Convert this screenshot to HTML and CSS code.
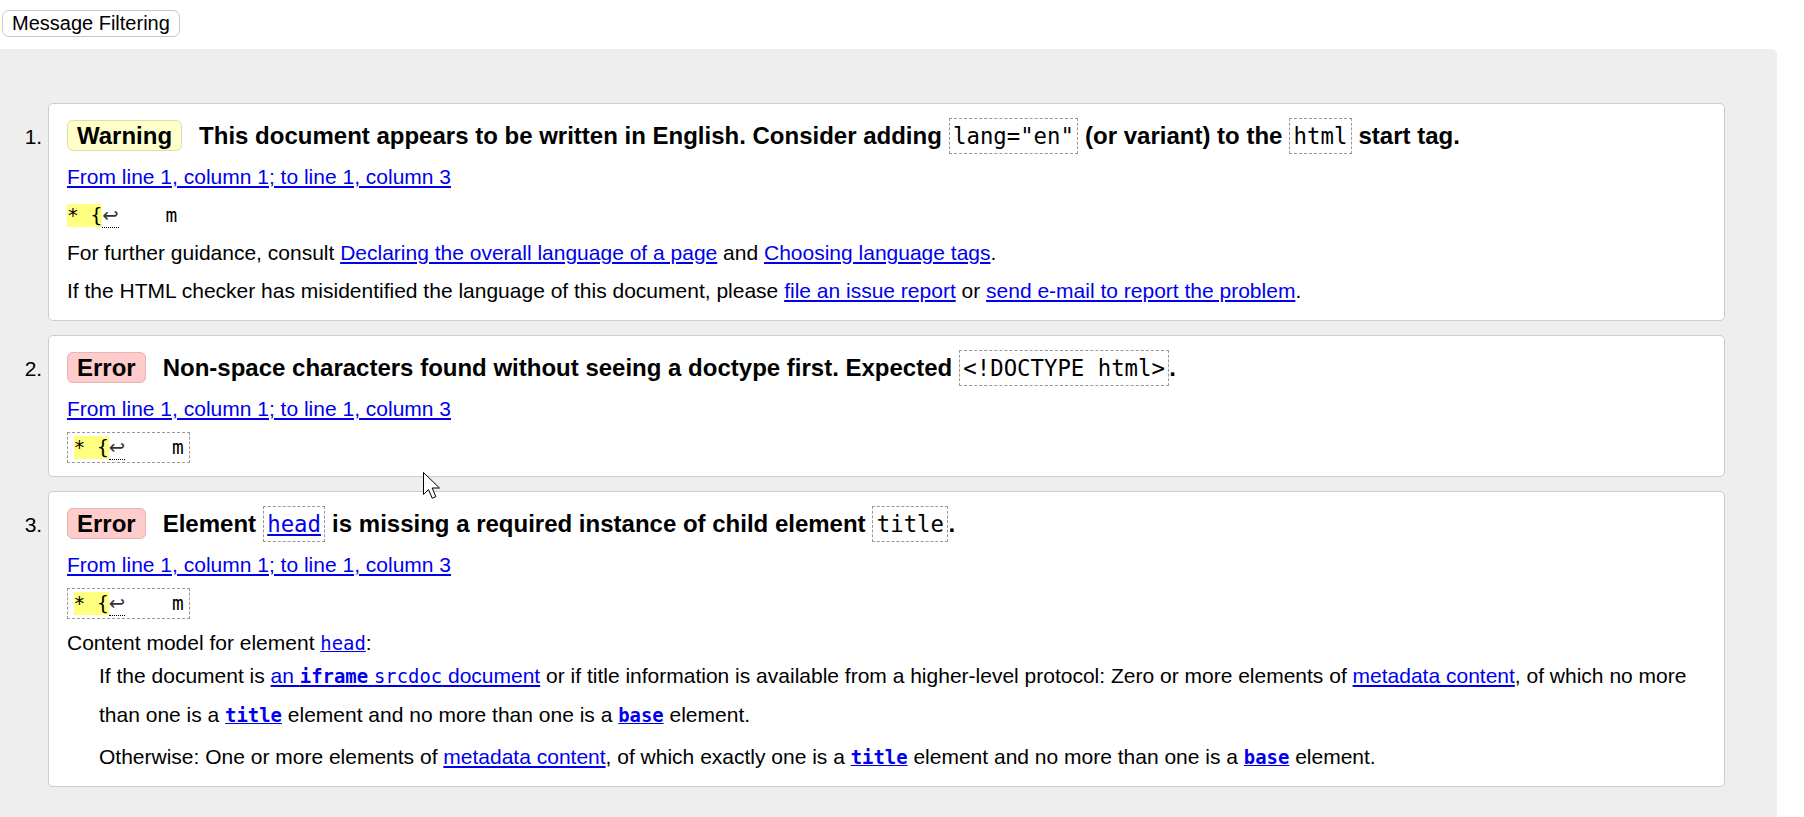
FILE: index.html
```html
<!DOCTYPE html>
<html lang="en">
<head>
<meta charset="utf-8">
<title>Nu Html Checker results</title>
<link rel="stylesheet" href="styles.css">
</head>
<body>
<div class="toolbar"><button class="filter-btn" type="button">Message Filtering</button></div>
<div class="results">
  <ol class="messages">
    <li class="msg warning">
      <p class="msg-head"><strong class="badge">Warning</strong><span>This document appears to be written in English. Consider adding <code class="hcode">lang="en"</code> (or variant) to the <code class="hcode">html</code> start tag.</span></p>
      <p class="loc"><a href="#">From line 1, column 1; to line 1, column 3</a></p>
      <p class="extract"><code class="ext"><b class="hl">* {</b><abbr class="lf" title="LF">↩</abbr>    m</code></p>
      <p class="info">For further guidance, consult <a href="#">Declaring the overall language of a page</a> and <a href="#">Choosing language tags</a>.</p>
      <p class="info">If the HTML checker has misidentified the language of this document, please <a href="#">file an issue report</a> or <a href="#">send e-mail to report the problem</a>.</p>
    </li>
    <li class="msg error">
      <p class="msg-head"><strong class="badge">Error</strong><span>Non-space characters found without seeing a doctype first. Expected <code class="hcode">&lt;!DOCTYPE html&gt;</code>.</span></p>
      <p class="loc"><a href="#">From line 1, column 1; to line 1, column 3</a></p>
      <p class="extract"><code class="ext boxed"><b class="hl">* {</b><abbr class="lf" title="LF">↩</abbr>    m</code></p>
    </li>
    <li class="msg error">
      <p class="msg-head"><strong class="badge">Error</strong><span>Element <code class="hcode"><a href="#">head</a></code> is missing a required instance of child element <code class="hcode">title</code>.</span></p>
      <p class="loc"><a href="#">From line 1, column 1; to line 1, column 3</a></p>
      <p class="extract"><code class="ext boxed"><b class="hl">* {</b><abbr class="lf" title="LF">↩</abbr>    m</code></p>
      <dl class="content-model">
        <dt class="cm-head">Content model for element <code class="ic"><a href="#">head</a></code>:</dt>
        <dd class="cm-body">
          <p>If the document is <a href="#">an <code class="ic strong">iframe</code> <code class="ic">srcdoc</code> document</a> or if title information is available from a higher-level protocol: Zero or more elements of <a href="#">metadata content</a>, of which no more than one is a <code class="ic strong"><a href="#">title</a></code> element and no more than one is a <code class="ic strong"><a href="#">base</a></code> element.</p>
          <p>Otherwise: One or more elements of <a href="#">metadata content</a>, of which exactly one is a <code class="ic strong"><a href="#">title</a></code> element and no more than one is a <code class="ic strong"><a href="#">base</a></code> element.</p>
        </dd>
      </dl>
    </li>
  </ol>
</div>
<svg class="cursor" width="20" height="30" viewBox="0 0 20 30" aria-hidden="true"><path d="M0.5 0.5 L0.5 22.5 L5.5 17.5 L9.2 26.2 L12.8 24.7 L9.2 16 L16.5 16 Z" fill="#fff" stroke="#000" stroke-width="1" stroke-linejoin="miter"/></svg>
</body>
</html>
```
FILE: styles.css
```css
html, body {
  margin: 0;
  padding: 0;
  background: #fff;
}

body {
  font-family: "Liberation Sans", Arial, sans-serif;
  color: #000;
}

a {
  color: #0000ee;
}

.toolbar {
  display: flex;
  padding: 10px 0 0 2px;
}

.filter-btn {
  font: 20px/23px "Liberation Sans", Arial, sans-serif;
  color: #000;
  background: #fff;
  border: 1px solid #c8c8c8;
  border-radius: 7px;
  padding: 1px 9px;
  margin: 0;
}

.results {
  background: #eeeeee;
  margin: 12px 27px 0 0;
  padding: 54px 52px 40px 48px;
  border-radius: 0 5px 0 0;
}

.messages {
  margin: 0;
  padding: 0;
  list-style: decimal outside;
  font-size: 21px;
}

.msg {
  background: #fff;
  border: 1px solid #cccccc;
  border-radius: 5px;
  padding: 18px 18px 17px;
  margin: 0 0 14px;
}

.msg p {
  margin: 14px 0 0;
  line-height: 24px;
}

.msg .msg-head {
  margin: 0;
  font-size: 24px;
  font-weight: bold;
  line-height: 28px;
}

.msg .loc {
  margin-top: 15px;
}

.badge {
  font-weight: bold;
  padding: 1px 9px;
  border: 1px solid;
  border-radius: 6px;
  margin-right: 17px;
}

.warning .badge {
  background: #ffffcc;
  border-color: #e2dca6;
}

.error .badge {
  background: #ffcccc;
  border-color: #e6b6b6;
}

code {
  font-family: "DejaVu Sans Mono", "Liberation Mono", monospace;
  font-size: 0.93em;
}

.hcode {
  font-weight: normal;
  border: 1px dashed #999;
  padding: 4px 3.5px;
}

.ext {
  white-space: pre;
  line-height: 1;
}

.ext.boxed {
  border: 1px dashed #999;
  padding: 3px 5.5px;
}

.hl {
  background: #ffff80;
  font-weight: normal;
}

.lf {
  font-family: "DejaVu Sans", sans-serif;
  text-decoration: none;
  border-bottom: 1px dotted #000;
  color: #333;
}

.content-model {
  margin: 16px 0 -7px;
}

.cm-head {
  line-height: 24px;
}

.cm-body {
  margin: 1px 0 0 32px;
}

.msg .cm-body p {
  margin: 0 0 3px;
  line-height: 39px;
}

.msg .cm-body p:last-child {
  margin-bottom: 0;
}

.ic {
  font-size: 0.9em;
  line-height: 1;
}

.ic.strong {
  font-weight: bold;
}

.cursor {
  position: absolute;
  left: 423px;
  top: 472px;
}
```
